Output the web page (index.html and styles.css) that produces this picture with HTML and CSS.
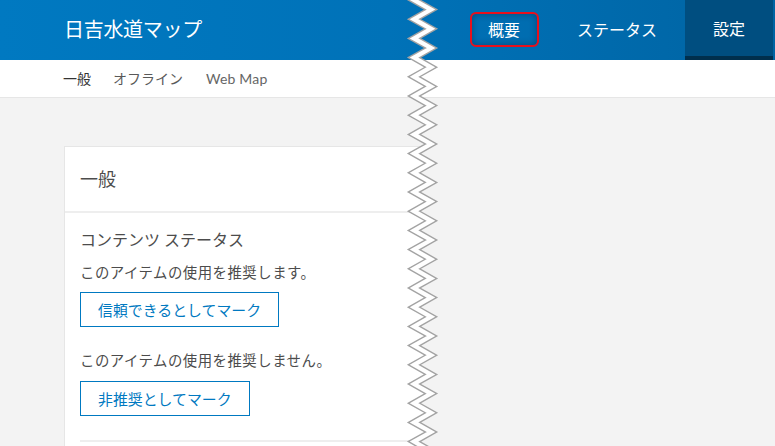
FILE: index.html
```html
<!DOCTYPE html>
<html lang="ja">
<head>
<meta charset="utf-8">
<title>日吉水道マップ</title>
<link rel="stylesheet" href="styles.css">
</head>
<body>
<div class="page">
  <header class="topbar">
    <div class="title">日吉水道マップ</div>
    <nav class="tabs">
      <a class="tab tab-marked"><span class="mark">概要</span></a>
      <a class="tab">ステータス</a>
      <a class="tab tab-active">設定</a>
    </nav>
  </header>
  <nav class="subnav">
    <a class="sub sub-active">一般</a>
    <a class="sub">オフライン</a>
    <a class="sub sub-latin">Web Map</a>
  </nav>
  <main class="content">
    <section class="card">
      <h2 class="card-head">一般</h2>
      <div class="card-body">
        <h3 class="sec-title">コンテンツ ステータス</h3>
        <p class="desc">このアイテムの使用を推奨します。</p>
        <button class="btn">信頼できるとしてマーク</button>
        <p class="desc desc-2">このアイテムの使用を推奨しません。</p>
        <button class="btn">非推奨としてマーク</button>
        <div class="rule"></div>
      </div>
    </section>
  </main>
  <svg class="tear" width="775" height="446" viewBox="0 0 775 446" aria-hidden="true">
    <defs>
      <clipPath id="below-nav"><rect x="0" y="98" width="775" height="360"/></clipPath>
    </defs>
    <path clip-path="url(#below-nav)" fill="#f3f3f3" d="M414 -19.2 l17 9.6l-17 9.6l17 9.6l-17 9.6l17 9.6l-17 9.6l17 9.6l-17 9.6l17 9.6l-17 9.6l17 9.6l-17 9.6l17 9.6l-17 9.6l17 9.6l-17 9.6l17 9.6l-17 9.6l17 9.6l-17 9.6l17 9.6l-17 9.6l17 9.6l-17 9.6l17 9.6l-17 9.6l17 9.6l-17 9.6l17 9.6l-17 9.6l17 9.6l-17 9.6l17 9.6l-17 9.6l17 9.6l-17 9.6l17 9.6l-17 9.6l17 9.6l-17 9.6l17 9.6l-17 9.6l17 9.6l-17 9.6l17 9.6l-17 9.6l17 9.6l-17 9.6l17 9.6l-17 9.6 L470 460.8 L470 -19.2 Z"/>
    <path fill="none" stroke="#a3a3a3" stroke-width="7" d="M414 -19.2 l17 9.6l-17 9.6l17 9.6l-17 9.6l17 9.6l-17 9.6l17 9.6l-17 9.6l17 9.6l-17 9.6l17 9.6l-17 9.6l17 9.6l-17 9.6l17 9.6l-17 9.6l17 9.6l-17 9.6l17 9.6l-17 9.6l17 9.6l-17 9.6l17 9.6l-17 9.6l17 9.6l-17 9.6l17 9.6l-17 9.6l17 9.6l-17 9.6l17 9.6l-17 9.6l17 9.6l-17 9.6l17 9.6l-17 9.6l17 9.6l-17 9.6l17 9.6l-17 9.6l17 9.6l-17 9.6l17 9.6l-17 9.6l17 9.6l-17 9.6l17 9.6l-17 9.6l17 9.6l-17 9.6"/>
    <path fill="none" stroke="#ffffff" stroke-width="4.2" d="M414 -19.2 l17 9.6l-17 9.6l17 9.6l-17 9.6l17 9.6l-17 9.6l17 9.6l-17 9.6l17 9.6l-17 9.6l17 9.6l-17 9.6l17 9.6l-17 9.6l17 9.6l-17 9.6l17 9.6l-17 9.6l17 9.6l-17 9.6l17 9.6l-17 9.6l17 9.6l-17 9.6l17 9.6l-17 9.6l17 9.6l-17 9.6l17 9.6l-17 9.6l17 9.6l-17 9.6l17 9.6l-17 9.6l17 9.6l-17 9.6l17 9.6l-17 9.6l17 9.6l-17 9.6l17 9.6l-17 9.6l17 9.6l-17 9.6l17 9.6l-17 9.6l17 9.6l-17 9.6l17 9.6l-17 9.6"/>
  </svg>
</div>
</body>
</html>
```

FILE: styles.css
```css
* { box-sizing: border-box; }

html, body {
  margin: 0;
  padding: 0;
  width: 775px;
  height: 446px;
  overflow: hidden;
  background: #f3f3f3;
  font-family: "Lato", "Noto Sans CJK JP", sans-serif;
  color: #4c4c4c;
}

.page {
  position: relative;
  width: 775px;
  height: 446px;
  display: flex;
  flex-direction: column;
}

.topbar {
  height: 60px;
  flex: none;
  display: flex;
  align-items: stretch;
  justify-content: space-between;
  background: linear-gradient(to right, #0079c1 0%, #0072b8 50%, #0064a3 100%);
  color: #fff;
  padding-right: 2px;
}

.title {
  display: flex;
  align-items: center;
  padding: 0 0 4px 64px;
  font-size: 20px;
  font-weight: 400;
  letter-spacing: -0.3px;
}

.tabs {
  display: flex;
  align-items: stretch;
}

.tab {
  display: flex;
  align-items: center;
  padding: 0 28px 2px;
  font-size: 16px;
  color: #fff;
}

.tab-marked {
  padding: 0 10px 2px;
}

.mark {
  display: flex;
  align-items: center;
  height: 35px;
  padding: 0 17px 0 16px;
  border: 2px solid #e8101c;
  border-radius: 6px;
  box-shadow: inset 0 0 7px rgba(0, 30, 60, 0.45);
}

.tab-active {
  background: #004e80;
  border-bottom: 4px solid #002f4d;
  padding-bottom: 0;
}

.subnav {
  height: 38px;
  flex: none;
  display: flex;
  align-items: center;
  gap: 22px;
  padding: 0 0 1px 63px;
  background: #fff;
  border-bottom: 1px solid #e6e6e6;
  font-size: 14px;
  color: #595959;
}

.sub-active {
  color: #333;
}

.sub-latin {
  margin-left: 1px;
  letter-spacing: 0.2px;
  color: #666;
}

.content {
  flex: 1;
  padding: 48px 0 0 64px;
  background: #f3f3f3;
}

.card {
  width: 390px;
  height: 320px;
  background: #fff;
  border: 1px solid #e6e6e6;
  border-right: none;
  border-bottom: none;
}

.card-head {
  margin: 0;
  height: 66px;
  display: flex;
  align-items: center;
  padding: 0 0 2px 15px;
  font-size: 18px;
  font-weight: 400;
  color: #4c4c4c;
  border-bottom: 2px solid #eeeeee;
}

.card-body {
  padding: 15px 0 0 15px;
}

.sec-title {
  margin: 0;
  font-size: 16px;
  line-height: 24px;
  font-weight: 400;
  color: #4c4c4c;
}

.desc {
  margin: 9px 0 7px;
  font-size: 14.4px;
  line-height: 24px;
  letter-spacing: 0.5px;
  color: #4c4c4c;
}

.desc-2 {
  margin-top: 22px;
  margin-bottom: 8px;
}

.btn {
  display: flex;
  align-items: center;
  height: 35px;
  padding: 0 17px;
  font-family: inherit;
  font-size: 14.9px;
  color: #0079c1;
  background: #fff;
  border: 1px solid #0079c1;
  border-radius: 0;
}

.rule {
  margin-top: 24px;
  height: 2px;
  background: #eeeeee;
}

.tear {
  position: absolute;
  top: 0;
  left: 0;
  pointer-events: none;
}
```
